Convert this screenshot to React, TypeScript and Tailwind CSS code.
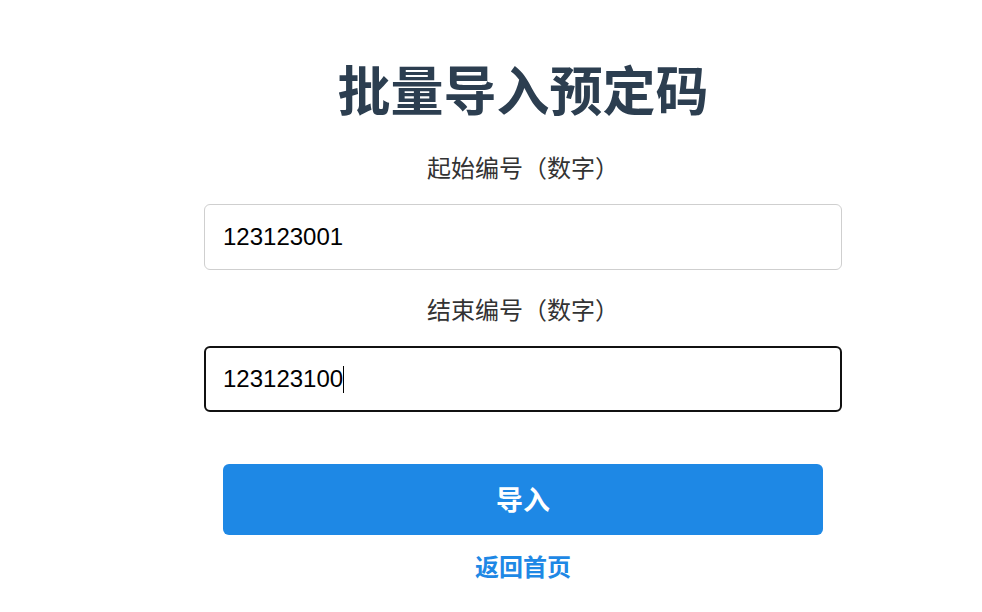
const CJK = "font-['Noto_Sans_CJK_SC','Noto_Sans',sans-serif]"

function Label({ children }: { children: React.ReactNode }) {
  return (
    <div className={`${CJK} text-center text-[24px] leading-[30px] text-[#333]`}>{children}</div>
  )
}

export default function App() {
  return (
    <div className="min-h-[612px] bg-white pl-16">
      <div className="mx-auto flex w-[638px] flex-col">
        <h1
          className={`${CJK} mt-[57px] text-center text-[53px] leading-[62px] font-bold text-[#2c3e50]`}
        >
          批量导入预定码
        </h1>

        <div className="mt-[33px]">
          <Label>起始编号（数字）</Label>
        </div>
        <input
          readOnly
          value="123123001"
          className="mt-[22px] h-[66px] w-full rounded-md border border-[#cfcfcf] px-[18px] font-['Liberation_Sans',sans-serif] text-[24px] text-black outline-none"
        />

        <div className="mt-[24px]">
          <Label>结束编号（数字）</Label>
        </div>
        <div className="mt-[22px] flex h-[66px] w-full items-center rounded-md border-2 border-[#111] px-[17px] font-['Liberation_Sans',sans-serif] text-[24px] text-black">
          <span>123123100</span>
          <span className="h-[27px] w-px bg-black" />
        </div>

        <button
          className={`${CJK} mx-auto mt-[52px] h-[71px] w-[600px] rounded-md bg-[#1e88e5] text-[27px] font-bold text-white`}
        >
          导入
        </button>

        <a
          href="#"
          className={`${CJK} mt-[15px] text-center text-[24px] leading-[32px] font-bold text-[#1e88e5]`}
        >
          返回首页
        </a>
      </div>
    </div>
  )
}
